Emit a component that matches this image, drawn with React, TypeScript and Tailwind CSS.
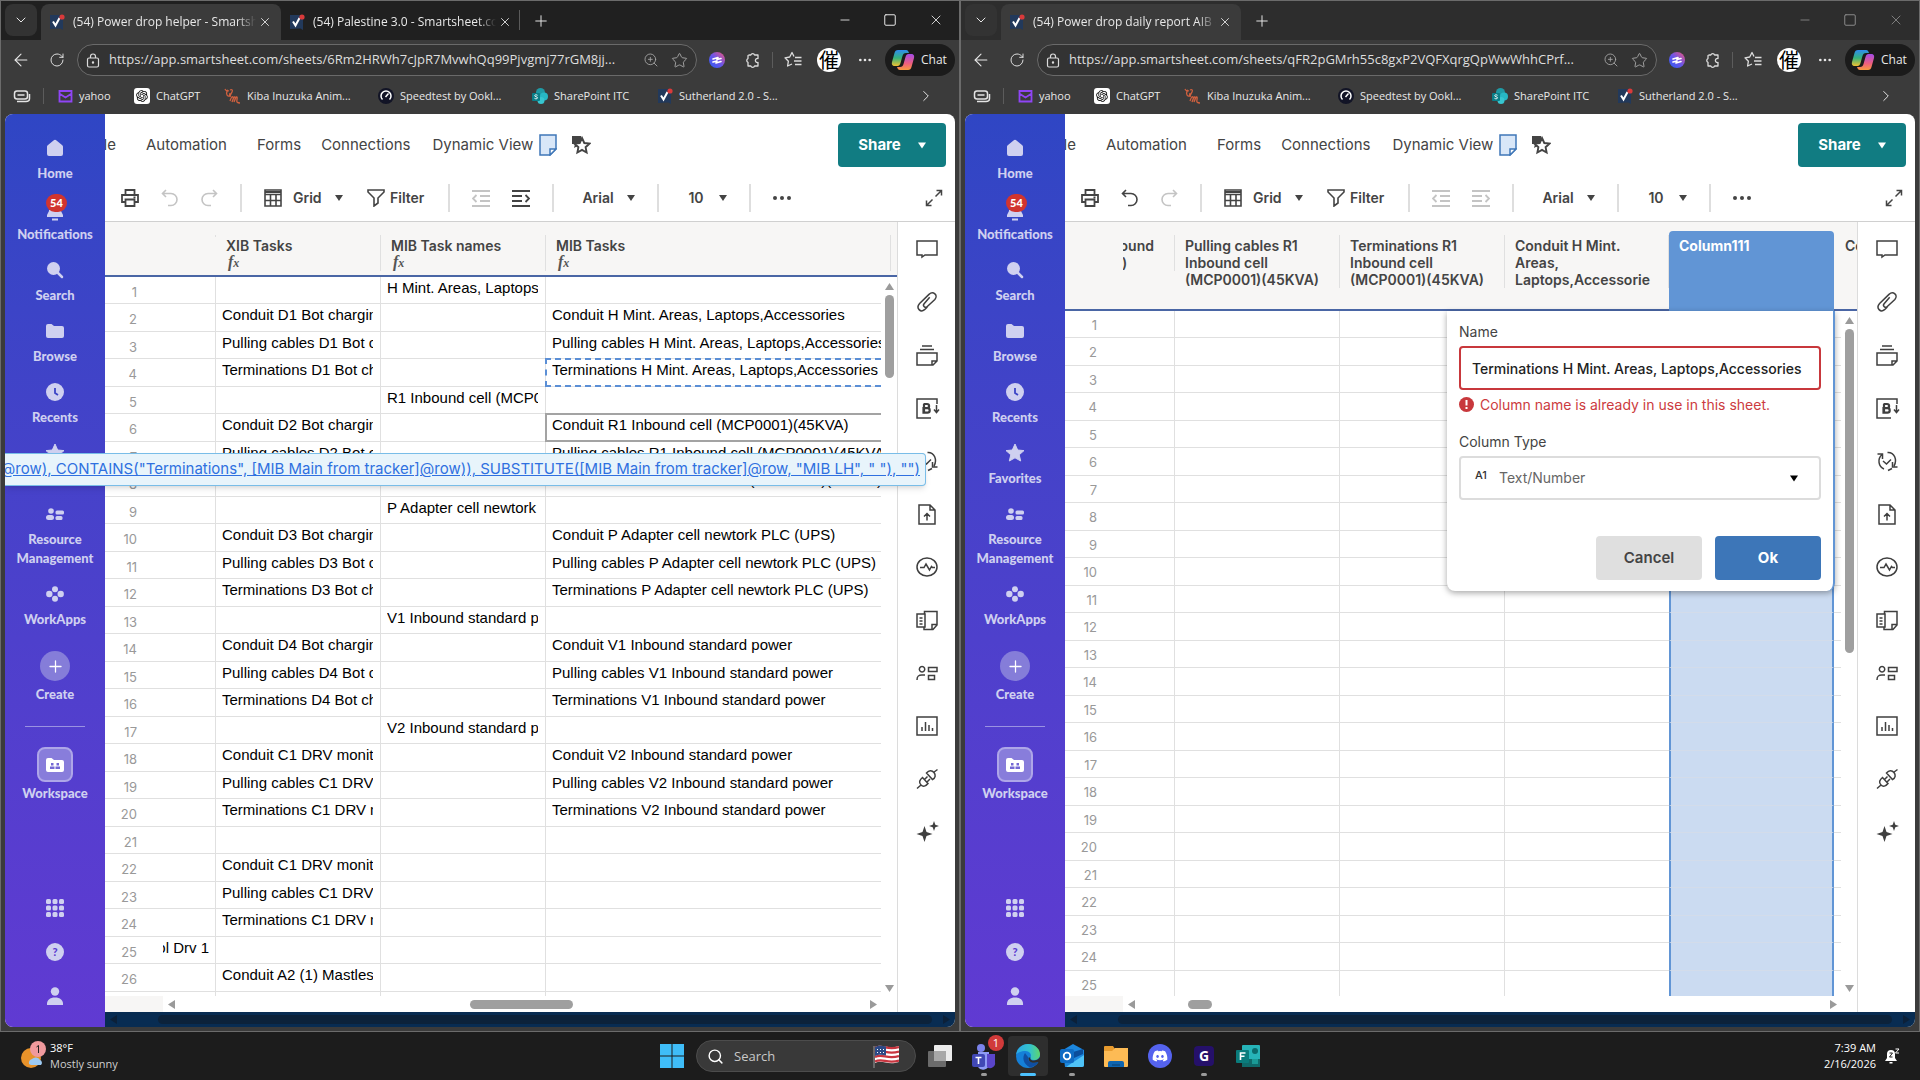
import clsx from 'clsx';
import {
  ArrowLeft,
  ChevronDown,
  ChevronRight,
  Ellipsis,
  Minus,
  Plus,
  RotateCw,
  Search,
  Square,
  Star,
  X,
  ZoomIn,
} from 'lucide-react';
import {FC, memo, ReactNode, useId} from 'react';
import {FaDiscord} from 'react-icons/fa';
import {RiOpenaiFill} from 'react-icons/ri';

type Row = [string?, string?, string?, string?];

interface BrowserTab {
  title: string;
}

const helperRows: Row[] = [
  ['', '', 'H Mint. Areas, Laptops,Accessories'],
  ['', 'Conduit D1 Bot charging', '', 'Conduit H Mint. Areas, Laptops,Accessories'],
  ['', 'Pulling cables D1 Bot charging', '', 'Pulling cables H Mint. Areas, Laptops,Accessories'],
  ['', 'Terminations D1 Bot charging', '', 'Terminations H Mint. Areas, Laptops,Accessories'],
  ['', '', 'R1 Inbound cell (MCP0001)(45KVA)'],
  ['', 'Conduit D2 Bot charging', '', 'Conduit R1 Inbound cell (MCP0001)(45KVA)'],
  ['', 'Pulling cables D2 Bot charging', '', 'Pulling cables R1 Inbound cell (MCP0001)(45KVA)'],
  ['', 'Terminations D2 Bot charging', '', 'Terminations R1 Inbound cell (MCP0001)(45KVA)'],
  ['', '', 'P Adapter cell newtork PLC (UPS)'],
  ['', 'Conduit D3 Bot charging', '', 'Conduit P Adapter cell newtork PLC (UPS)'],
  ['', 'Pulling cables D3 Bot charging', '', 'Pulling cables P Adapter cell newtork PLC (UPS)'],
  ['', 'Terminations D3 Bot charging', '', 'Terminations P Adapter cell newtork PLC (UPS)'],
  ['', '', 'V1 Inbound standard power'],
  ['', 'Conduit D4 Bot charging', '', 'Conduit V1 Inbound standard power'],
  ['', 'Pulling cables D4 Bot charging', '', 'Pulling cables V1 Inbound standard power'],
  ['', 'Terminations D4 Bot charging', '', 'Terminations V1 Inbound standard power'],
  ['', '', 'V2 Inbound standard power'],
  ['', 'Conduit C1 DRV monitor', '', 'Conduit V2 Inbound standard power'],
  ['', 'Pulling cables C1 DRV monitor', '', 'Pulling cables V2 Inbound standard power'],
  ['', 'Terminations C1 DRV monitor', '', 'Terminations V2 Inbound standard power'],
  [],
  ['', 'Conduit C1 DRV monitor'],
  ['', 'Pulling cables C1 DRV monitor'],
  ['', 'Terminations C1 DRV monitor'],
  ['ol Drv 1'],
  ['', 'Conduit A2 (1) Mastless'],
  [],
];

const reportRows = Array.from({length: 25}, (_, i) => i + 1);

const SmartsheetFavicon: FC = memo(() => (
  <svg className="h-4 w-4 shrink-0" viewBox="0 0 16 16">
    <path d="M1 1h13v15l-2.500-1.500L1 15z" fill="#22395b" />
    <path d="M4 7.500l2.500 4L10.500 4" fill="none" stroke="#fff" strokeWidth="2" />
    <circle cx="13" cy="3" fill="#d93a3a" r="2.600" />
  </svg>
));

const YahooIcon: FC = memo(() => (
  <svg className="h-[15px] w-[15px]" viewBox="0 0 15 15">
    <path d="M1.500 2h12v10.500h-12zM2 5l5.500 3.500L13 5" fill="none" stroke="#8f45f5" strokeWidth="1.800" />
  </svg>
));

const ChatGptIcon: FC = memo(() => (
  <span className="flex h-4 w-4 items-center justify-center rounded-[3px] bg-white text-black">
    <RiOpenaiFill size={14} />
  </span>
));

const KibaIcon: FC = memo(() => (
  <svg className="h-4 w-[17px]" viewBox="0 0 17 16">
    <path
      d="M1 1c1 2 2 2 3 1M5 3c-2-1-3 2-2 4s3 1 3-1H5M6 2c2-1 3 0 2 2s-2 3-2 5M6 13c1-3 2-5 3-4s-1 5-1 5 2-6 3-5-1 5-1 5 2-6 3-5-1 4 0 5 2 1 3 1"
      fill="none"
      stroke="#d0613f"
      strokeWidth="1.300"
    />
  </svg>
));

const SpeedtestIcon: FC = memo(() => (
  <svg className="h-4 w-4" viewBox="0 0 16 16">
    <circle cx="8" cy="8" fill="#121426" r="8" />
    <path d="M4.500 11.500a5 5 0 1 1 7 0" fill="none" stroke="#fff" strokeWidth="1.500" />
    <path d="M7.500 9l3-3.500" stroke="#fff" strokeWidth="1.500" />
  </svg>
));

const SharePointIcon: FC = memo(() => (
  <svg className="h-4 w-4" viewBox="0 0 16 16">
    <circle cx="8.500" cy="4.500" fill="#1f9aa5" r="4.500" />
    <circle cx="12" cy="8.500" fill="#27b7c4" r="4" />
    <circle cx="9" cy="12.500" fill="#37c6d0" r="3.500" />
    <rect fill="#0a7f88" height="8" rx="1" width="8" y="5" />
    <path d="M5.500 7.300c-1-.8-3-.5-2.800.5.200 1.100 2.800.8 2.800 2 0 1.100-2 1.300-3 .5" fill="none" stroke="#fff" />
  </svg>
));

const CollectionsIcon: FC = memo(() => (
  <svg className="h-4 w-[18px]" fill="none" stroke="#e4e4e4" strokeWidth="1.500" viewBox="0 0 18 16">
    <rect height="8" rx="2.500" width="13" x="1.500" y="3" />
    <path d="M4.500 7h7M4 13.500h9c2.500 0 3.500-1.500 3.500-3V6" />
  </svg>
));

const bookmarks: {label: string; width: string; icon: ReactNode}[] = [
  {label: 'yahoo', width: 'w-[76px]', icon: <YahooIcon />},
  {label: 'ChatGPT', width: 'w-[90px]', icon: <ChatGptIcon />},
  {label: 'Kiba Inuzuka Anim...', width: 'w-[154px]', icon: <KibaIcon />},
  {label: 'Speedtest by Ookl...', width: 'w-[154px]', icon: <SpeedtestIcon />},
  {label: 'SharePoint ITC', width: 'w-[125px]', icon: <SharePointIcon />},
  {label: 'Sutherland 2.0 - S...', width: 'w-[140px]', icon: <SmartsheetFavicon />},
];

const CopilotIcon: FC = memo(() => {
  const id = useId();
  return (
    <svg className="h-6 w-6" viewBox="0 0 24 24">
      <defs>
        <linearGradient id={`${id}a`} x1="0" x2="0" y1="0" y2="1">
          <stop offset="0" stopColor="#2f8cf0" />
          <stop offset=".5" stopColor="#34b27b" />
          <stop offset="1" stopColor="#f2c230" />
        </linearGradient>
        <linearGradient id={`${id}b`} x1="0" x2="0" y1="0" y2="1">
          <stop offset="0" stopColor="#a44be8" />
          <stop offset=".6" stopColor="#ef5f7d" />
          <stop offset="1" stopColor="#f79a3e" />
        </linearGradient>
      </defs>
      <path
        d="M7 2h8c2 0 2.500 1.500 3 3h-3c-2 0-3 1-3.500 3L9.500 15c-.5 2-1.500 3-3 3H4c-3 0-3.500-2-3-4L3.500 5C4 3 5 2 7 2z"
        fill={`url(#${id}a)`}
      />
      <path
        d="M17 22H9c-2 0-2.500-1.500-3-3h3c2 0 3-1 3.500-3l2-7c.5-2 1.500-3 3-3H20c3 0 3.500 2 3 4l-2.500 9c-.5 2-1.500 3-3.500 3z"
        fill={`url(#${id}b)`}
      />
    </svg>
  );
});

const OrbIcon: FC = memo(() => {
  const id = useId();
  return (
    <svg className="h-4 w-4" viewBox="0 0 16 16">
      <defs>
        <linearGradient id={id} x1="0" x2="1" y1="1" y2="0">
          <stop offset="0" stopColor="#2b5bf5" />
          <stop offset=".5" stopColor="#6b55e8" />
          <stop offset="1" stopColor="#f0557a" />
        </linearGradient>
      </defs>
      <circle cx="8" cy="8" fill={`url(#${id})`} r="8" />
      <path
        d="M4 7l5-1.500L8 7.500l4-1M4 10l4-1-1 2 5-1.500"
        fill="none"
        stroke="#fff"
        strokeLinecap="round"
        strokeLinejoin="round"
        strokeWidth="1.600"
      />
    </svg>
  );
});

const ExtensionsIcon: FC = memo(() => (
  <svg className="h-[17px] w-[15px]" fill="none" stroke="#dcdcdc" strokeWidth="1.300" viewBox="0 0 15 17">
    <path
      d="M4 3h1.800a2 2 0 0 1 3.800 0H13v3.500c-3.500-.6-3.500 4.500 0 4v3.500H9.600a2 2 0 0 1-3.800 0H3v-3.700a2 2 0 0 1 0-3.700V3.500z"
      strokeLinejoin="round"
    />
  </svg>
));

const FavoritesIcon: FC = memo(() => (
  <svg className="h-[18px] w-[18px]" fill="none" stroke="#dcdcdc" strokeWidth="1.300" viewBox="0 0 18 18">
    <path d="M10 5.500L8 1.500 5.700 6l-4.700.8 3.400 3.400-.8 4.800L8 13" strokeLinejoin="round" />
    <path d="M11 6.500h6.500M10 10h7.500M11 13.500h6.500" />
  </svg>
));

const BrowserChrome: FC<{tabs: BrowserTab[]; url: string; active: boolean}> = memo(({tabs, url, active}) => (
  <header className="font-['Open_Sans','Noto_Sans',sans-serif] text-[#e8e8e8]">
    <div className={clsx('flex h-[39px] items-end', active ? 'bg-[#202020]' : 'bg-[#2d2d2d]')}>
      <button
        aria-label="Tab actions"
        className="mb-1 ml-1 flex h-8 w-8 items-center justify-center rounded-lg bg-[#333333]">
        <ChevronDown size={16} strokeWidth={1.500} />
      </button>
      {tabs.map(({title}, index) => (
        <div
          className={clsx('flex h-9 items-center rounded-t-lg', index === 0 ? 'ml-1 w-60 bg-[#3b3b3b] pl-2' : 'w-[238px] pl-2')}
          key={title}>
          <SmartsheetFavicon />
          <span className="ml-2 w-[183px] overflow-hidden mask-r-from-90% text-xs whitespace-nowrap">{title}</span>
          <button aria-label="Close tab" className="ml-[2px]">
            <X size={14} strokeWidth={1.500} />
          </button>
        </div>
      ))}
      {tabs.length > 1 && <span className="mb-2.5 h-5 w-px bg-[#5a5a5a]" />}
      <button aria-label="New tab" className="mb-2.5 ml-3">
        <Plus size={18} strokeWidth={1.300} />
      </button>
      <div className={clsx('mr-[15px] mb-3 ml-auto flex items-center gap-[31px]', !active && 'text-[#8a8a8a]')}>
        <button aria-label="Minimize">
          <Minus size={14} strokeWidth={1.500} />
        </button>
        <button aria-label="Maximize">
          <Square size={14} strokeWidth={1.700} />
        </button>
        <button aria-label="Close">
          <X size={16} strokeWidth={1.300} />
        </button>
      </div>
    </div>
    <div className="flex h-10 items-center">
      <button aria-label="Back" className="ml-[10px]">
        <ArrowLeft size={20} strokeWidth={1.300} />
      </button>
      <button aria-label="Reload" className="ml-[18px]">
        <RotateCw size={16} strokeWidth={1.400} />
      </button>
      <div className="ml-3 flex h-8 min-w-0 flex-1 items-center rounded-full border border-[#6a6a6a] bg-[#333333] pr-2 pl-2">
        <svg className="h-[15px] w-[14px] shrink-0" fill="none" stroke="#dcdcdc" strokeWidth="1.200" viewBox="0 0 14 15">
          <rect height="9" rx="1.500" width="11" x="1.500" y="5" />
          <path d="M4.500 5V3.500a2.500 2.500 0 0 1 5 0V5" />
          <circle cx="7" cy="9.500" fill="#dcdcdc" r=".6" />
        </svg>
        <input
          aria-label="Address"
          className="ml-[9px] min-w-0 flex-1 bg-transparent text-[13px] text-[#dedede] outline-none"
          readOnly
          type="text"
          value={url}
        />
        <button aria-label="Zoom" className="text-[#a8a8a8]">
          <ZoomIn size={16} strokeWidth={1.300} />
        </button>
        <button aria-label="Add to favorites" className="ml-3 text-[#a8a8a8]">
          <Star size={17} strokeWidth={1.300} />
        </button>
      </div>
      <button aria-label="Extension" className="ml-3">
        <OrbIcon />
      </button>
      <button aria-label="Extensions" className="ml-[20px]">
        <ExtensionsIcon />
      </button>
      <span className="ml-3 h-4 w-px bg-[#5c5c5c]" />
      <button aria-label="Favorites" className="ml-[11px]">
        <FavoritesIcon />
      </button>
      <button
        aria-label="Profile"
        className="ml-[15px] flex h-6 w-6 items-center justify-center rounded-full bg-white font-['Noto_Sans_CJK_JP',sans-serif] text-xl leading-6 text-black">
        催
      </button>
      <button aria-label="Settings" className="ml-4">
        <Ellipsis size={16} />
      </button>
      <button className="mr-1 ml-3 flex h-8 w-[70px] items-center gap-[6px] rounded-full bg-[#1b1b1b] pl-[6px] text-xs">
        <CopilotIcon />
        Chat
      </button>
    </div>
    <nav className="flex h-[34px] items-center pb-[2px] text-[11px]">
      <span className="ml-3">
        <CollectionsIcon />
      </span>
      <span className="mr-[14px] ml-3 h-4 w-px bg-[#5c5c5c]" />
      {bookmarks.map(({label, width, icon}) => (
        <a className={clsx('flex shrink-0 items-center gap-[6px] whitespace-nowrap', width)} href="#" key={label}>
          {icon}
          {label}
        </a>
      ))}
      <button aria-label="More bookmarks" className="mr-6 ml-auto">
        <ChevronRight size={18} strokeWidth={1.300} />
      </button>
    </nav>
  </header>
));

const SideItem: FC<{label: string; children: ReactNode}> = memo(({label, children}) => (
  <a className="flex flex-col items-center text-center" href="#">
    <span className="flex h-5 items-center">{children}</span>
    <span className="mt-[6px] leading-[19px]">{label}</span>
  </a>
));

const Sidebar: FC = memo(() => (
  <aside className="flex w-[100px] shrink-0 flex-col bg-linear-to-b from-[#2f46c4] to-[#603ad2] pt-6 font-['Lato',sans-serif] text-[13px] font-black text-[#cfd0f0]">
    <nav className="flex flex-col gap-4">
      <SideItem label="Home">
        <svg className="h-[18px] w-[18px]" viewBox="0 0 18 18">
          <path d="M1 8c0-1 .3-1.500 1-2l5.500-4.500a2.300 2.300 0 0 1 3 0L16 6c.7.500 1 1 1 2v7a2 2 0 0 1-2 2H3a2 2 0 0 1-2-2z" fill="currentColor" />
        </svg>
      </SideItem>
      <SideItem label="Notifications">
        <span className="relative flex">
          <svg className="h-6 w-[18px]" viewBox="0 0 18 24">
            <path d="M3 8a6 6 0 0 1 12 0v6l2 4v2H1v-2l2-4zM6 21.500h6v2H6z" fill="currentColor" />
          </svg>
          <span className="absolute -top-[3px] left-0 flex h-[18px] w-[21px] items-center justify-center rounded-full bg-[#d1342f] text-[11px] text-white">
            54
          </span>
        </span>
      </SideItem>
      <SideItem label="Search">
        <svg className="h-[18px] w-[18px]" viewBox="0 0 18 18">
          <circle cx="7.500" cy="7.500" fill="currentColor" r="6.500" />
          <path d="M11 11l5 5" stroke="currentColor" strokeLinecap="round" strokeWidth="2.500" />
        </svg>
      </SideItem>
      <SideItem label="Browse">
        <svg className="h-4 w-[18px]" viewBox="0 0 18 16">
          <path d="M0 3a2 2 0 0 1 2-2h3.500L8 3h8a2 2 0 0 1 2 2v8a2 2 0 0 1-2 2H2a2 2 0 0 1-2-2z" fill="currentColor" />
        </svg>
      </SideItem>
      <SideItem label="Recents">
        <svg className="h-[18px] w-[18px]" viewBox="0 0 18 18">
          <circle cx="9" cy="9" fill="currentColor" r="9" />
          <path d="M9 5v5l3 2" fill="none" stroke="#3b44c6" strokeWidth="1.800" />
        </svg>
      </SideItem>
      <SideItem label="Favorites">
        <svg className="h-5 w-5" viewBox="0 0 20 20">
          <path d="M10 1l2.700 6 6.300.6-4.800 4.200L15.700 18 10 14.800 4.300 18l1.500-6.200L1 7.600 7.300 7z" fill="currentColor" stroke="currentColor" strokeLinejoin="round" />
        </svg>
      </SideItem>
      <SideItem label="Resource Management">
        <svg className="h-3 w-[18px]" fill="currentColor" viewBox="0 0 18 12">
          <circle cx="5" cy="3" r="2.800" />
          <rect height="5" rx="2.500" width="8" y="7" />
          <rect height="4" rx="1.500" width="8.500" x="9.500" y="2.500" />
          <rect height="4" rx="1.500" width="7" x="9.500" y="8" />
        </svg>
      </SideItem>
      <SideItem label="WorkApps">
        <svg className="h-[18px] w-[18px]" fill="currentColor" viewBox="0 0 18 18">
          <circle cx="9" cy="4.300" r="3" />
          <circle cx="9" cy="13.700" r="3" />
          <circle cx="3.300" cy="9" r="3.200" />
          <circle cx="14.700" cy="9" r="3.200" />
        </svg>
      </SideItem>
      <a className="mt-[6px] flex flex-col items-center" href="#">
        <span className="flex h-[30px] w-[30px] items-center justify-center rounded-full bg-[#857dd9] text-white">
          <Plus size={19} strokeWidth={1.600} />
        </span>
        <span className="mt-1 leading-[19px]">Create</span>
      </a>
    </nav>
    <hr className="mx-5 mt-[22px] border-[#9a92e2]" />
    <a className="mt-5 flex flex-col items-center" href="#">
      <span className="flex h-[35px] w-9 items-center justify-center rounded-lg border-2 border-[#aea6e8] bg-[#887ddb] text-white">
        <svg className="h-4 w-[18px]" viewBox="0 0 18 16">
          <path d="M0 3a2 2 0 0 1 2-2h3.500L8 3h8a2 2 0 0 1 2 2v8a2 2 0 0 1-2 2H2a2 2 0 0 1-2-2z" fill="currentColor" />
          <path d="M5 6h2.500v2.500H5zM10.500 6H13v2.500h-2.500zM4 9.500h4.500V12H4zM9.500 9.500H14V12H9.500z" fill="#7468d4" />
        </svg>
      </span>
      <span className="mt-[2px] leading-[19px]">Workspace</span>
    </a>
    <div className="mt-auto mb-[22px] flex flex-col items-center gap-[26px]">
      <button aria-label="Apps">
        <svg className="h-[18px] w-[18px]" fill="currentColor" viewBox="0 0 18 18">
          {[0, 6.5, 13].map(y => [0, 6.5, 13].map(x => <rect height="5" key={`${x}-${y}`} rx="1.500" width="5" x={x} y={y} />))}
        </svg>
      </button>
      <button
        aria-label="Help"
        className="flex h-[18px] w-[18px] items-center justify-center rounded-full bg-[#cfd0f0] text-[11px] text-[#5b3ccf]">
        ?
      </button>
      <button aria-label="Account">
        <svg className="h-[18px] w-[18px]" fill="currentColor" viewBox="0 0 18 18">
          <circle cx="9" cy="4.500" r="4.200" />
          <path d="M1 18c-.5-5 3-7.500 8-7.500s8.500 2.500 8 7.500z" />
        </svg>
      </button>
    </div>
  </aside>
));

const Caret: FC<{className?: string}> = memo(({className}) => (
  <svg className={clsx('pointer-events-none h-[6px] w-[8px] shrink-0', className)} viewBox="0 0 8 6">
    <path d="M0 0h8L4 6z" fill="currentColor" />
  </svg>
));

const MenuRow: FC = memo(() => (
  <div className="flex h-[62px] shrink-0 items-center overflow-hidden text-[15px] whitespace-nowrap text-[#444]">
    <a className="-ml-4 w-[27px] shrink-0 text-right" href="#">
      File
    </a>
    <a className="ml-[30px]" href="#">
      Automation
    </a>
    <a className="ml-[30px]" href="#">
      Forms
    </a>
    <a className="ml-5" href="#">
      Connections
    </a>
    <a className="ml-[22px]" href="#">
      Dynamic View
    </a>
    <svg className="ml-[6px] h-[22px] w-[18px] shrink-0" viewBox="0 0 18 22">
      <path d="M1 1h16v14l-6 6H1z" fill="#d9e7f8" stroke="#3f77b8" strokeWidth="1.500" />
      <path d="M17 15h-6v6z" fill="#fff" stroke="#3f77b8" strokeWidth="1.500" />
    </svg>
    <button aria-label="Favorite sheet" className="ml-[14px]">
      <svg className="h-5 w-5" viewBox="0 0 20 20">
        <path d="M1 1h9v8L3 13l1-4H1z" fill="#444" />
        <path d="M11 3l2.300 5 5.200.6-3.900 3.600 1 5.300-4.600-2.600L6.400 17.500l1-5.300L3.500 8.600 8.700 8z" fill="#fff" stroke="#444" strokeWidth="1.900" />
      </svg>
    </button>
    <button className="mr-[9px] ml-auto flex h-11 w-[108px] shrink-0 items-center justify-center gap-[17px] rounded bg-[#117c82] font-bold text-white">
      Share
      <Caret className="h-[7px]" />
    </button>
  </div>
));

const Divider: FC<{className?: string}> = ({className}) => (
  <span className={clsx('h-7 w-[2px] shrink-0 bg-[#dedede]', className)} />
);

const IndentIcon: FC<{out?: boolean}> = ({out}) => (
  <svg className="h-[17px] w-[18px]" fill="none" stroke="currentColor" strokeWidth="1.800" viewBox="0 0 18 17">
    <path d="M0 1h18M0 16h18" />
    {out ? <path d="M8 6h10M8 11h10M4.500 5L1 8.500 4.500 12" /> : <path d="M0 6h10M0 11h10M13.500 5L17 8.500 13.500 12" />}
  </svg>
);

const ToolSelect: FC<{label: string; value: string; className?: string}> = ({label, value, className}) => (
  <span className={clsx('flex items-center', className)}>
    <select aria-label={label} className="flex-1 appearance-none bg-transparent font-semibold outline-none">
      <option>{value}</option>
    </select>
    <Caret />
  </span>
);

const ToolRow: FC<{canUndo: boolean}> = memo(({canUndo}) => (
  <div className="flex h-[46px] shrink-0 items-center border-b border-[#d0d0d0] pb-px text-sm text-[#444]">
    <button aria-label="Print" className="ml-4">
      <svg className="h-[18px] w-[18px]" fill="none" stroke="currentColor" strokeWidth="1.800" viewBox="0 0 18 18">
        <path d="M4.500 6V1h9v5M4.500 13H1V6h16v7h-3.500M4.500 10.500h9V17h-9zM12.500 8.300h2" />
      </svg>
    </button>
    <button aria-label="Undo" className={clsx('ml-[22px]', !canUndo && 'text-[#c4c4c4]')}>
      <svg className="h-[18px] w-[18px]" fill="none" stroke="currentColor" strokeWidth="1.600" viewBox="0 0 18 18">
        <path d="M5 1L1.500 4.500 5 8M2 4.500h8a6 6 0 0 1 0 12H7" />
      </svg>
    </button>
    <button aria-label="Redo" className="ml-[21px] text-[#c4c4c4]">
      <svg className="h-[18px] w-[18px]" fill="none" stroke="currentColor" strokeWidth="1.600" viewBox="0 0 18 18">
        <path d="M13 1l3.500 3.500L13 8M16 4.500H8a6 6 0 0 0 0 12h3" />
      </svg>
    </button>
    <Divider className="ml-[22px]" />
    <svg className="ml-[22px] h-[18px] w-[18px]" fill="none" stroke="currentColor" strokeWidth="1.600" viewBox="0 0 18 18">
      <path d="M1 1h16v16H1zM1 5.500h16M1 11.500h16M6.500 5.500V17M12 5.500V17" />
      <path d="M1 3h16" strokeWidth="2" />
    </svg>
    <ToolSelect className="ml-[11px] w-[50px]" label="View" value="Grid" />
    <button className="ml-[24px] flex items-center gap-[5px] font-semibold">
      <svg className="h-[18px] w-[18px]" fill="none" stroke="currentColor" strokeWidth="1.600" viewBox="0 0 18 18">
        <path d="M1 1h16v2l-6 6v5l-4 3V9L1 3z" />
      </svg>
      Filter
    </button>
    <Divider className="ml-[24px]" />
    <button aria-label="Outdent" className="ml-[22px] text-[#c4c4c4]">
      <IndentIcon out />
    </button>
    <button aria-label="Indent" className={clsx('ml-[22px]', canUndo && 'text-[#c4c4c4]')}>
      <IndentIcon />
    </button>
    <Divider className="ml-[22px]" />
    <ToolSelect className="ml-[28px] w-[53px]" label="Font" value="Arial" />
    <Divider className="ml-[22px]" />
    <ToolSelect className="ml-[29px] w-[39px]" label="Font size" value="10" />
    <Divider className="ml-[22px]" />
    <button aria-label="More" className="ml-[22px]">
      <svg className="h-[18px] w-[18px]" fill="currentColor" viewBox="0 0 18 18">
        <circle cx="2" cy="9" r="2" />
        <circle cx="9" cy="9" r="2" />
        <circle cx="16" cy="9" r="2" />
      </svg>
    </button>
    <button aria-label="Expand" className="mr-3 ml-auto">
      <svg className="h-[18px] w-[18px]" fill="none" stroke="currentColor" strokeWidth="1.500" viewBox="0 0 18 18">
        <path d="M11.500 1.500h5v5M16.500 1.500l-6 6M6.500 16.500h-5v-5M1.500 16.500l6-6" />
      </svg>
    </button>
  </div>
));

const railIcons: {label: string; paths: ReactNode}[] = [
  {label: 'Conversations', paths: <path d="M1 3h20v14H9l-3 2v-2H1z" />},
  {
    label: 'Attachments',
    paths: (
      <path d="M14 6.500L8 12.500c-2 2 .8 5 3 3l8-6.500c4-4-1-9-5.500-5.500L3.500 12c-4.500 4.500.5 9.500 4.500 6.500l3-2.500" transform="rotate(-4 11 11)" />
    ),
  },
  {label: 'Proofs', paths: <path d="M6 2h10M4 5.500h14M1 9h20v8l-4 4H1zM21 17h-5v4" />},
  {
    label: 'Brandfolder',
    paths: (
      <>
        <path d="M15 21H1V2h20v5M20.500 8v7M18 12.500l2.500 3 2.500-3" />
        <path d="M7.500 7h3.500a2 2 0 0 1 0 4.200H8.500M7.500 11.200h4a2.200 2.200 0 0 1 0 4.400h-4zM8 7v8" strokeWidth="2.200" />
      </>
    ),
  },
  {
    label: 'Update requests',
    paths: <path d="M1.500 4h5v5M6 4.500C1 9 2.500 17 8 19M11.500 2.500c7-.5 10 7.500 6.500 13.500M21.500 17h-5v-5M12 20.500l4-2M7 11l3.500 3 4.500-4.500" />,
  },
  {label: 'Publish', paths: <path d="M3 2h11l5 5v14H3zM14 2v5h5M11 17.500v-7M8 13.500l3-3 3 3" />},
  {
    label: 'Activity log',
    paths: (
      <>
        <ellipse cx="11" cy="11" rx="10" ry="9" />
        <path d="M4 11.500h4l2-3.500 3.500 6 2-3.500 1 1H19" />
      </>
    ),
  },
  {label: 'Summary', paths: <path d="M8.500 5V2.500H21V16l-4 4.500H8V18M21 15.500h-5v5M1 5h8v13H1zM3.500 9h3M3.500 12h3M3.500 15h3" />},
  {label: 'Resource', paths: <path d="M6 4.500a2.700 2.700 0 1 0 .1 0zM1 18c0-4 1.500-5 5-5h3M12.500 5.500H21v4h-8.500zM12.500 13.500h6v4h-6z" />},
  {label: 'Charts', paths: <path d="M1 2h20v18H1zM6 16v-4M9.500 16V7M13 16v-6M16.500 16v-3" />},
  {
    label: 'Connectors',
    paths: (
      <path d="M1 20.500l4-3.500M21.500 1.500l-4 3M5 17c-2.500-2.500-1.500-5 1.500-7.500l5.500 6c-2.500 3-5 3.500-7 1.500zM10.500 5l6 6.500c3-1.500 3.500-4.500 1.500-7s-5-2.500-7.500.5zM8.500 11.500l3-3M11 14l3-3" />
    ),
  },
  {
    label: 'AI',
    paths: (
      <path d="M8.500 5l2 6 6 2-6 2-2 6-2-6-6-2 6-2zM18 0l1.300 3.700L23 5l-3.700 1.300L18 10l-1.300-3.700L13 5l3.700-1.300z" fill="currentColor" stroke="none" />
    ),
  },
];

const RightRail: FC = memo(() => (
  <aside className="flex w-[58px] shrink-0 flex-col items-center gap-[31px] border-l border-[#dcdcdc] pt-4 text-[#3f3f3f]">
    {railIcons.map(({label, paths}) => (
      <button aria-label={label} className="flex" key={label}>
        <svg className="h-[22px] w-[22px] overflow-visible" fill="none" stroke="currentColor" strokeWidth="1.500" viewBox="0 0 22 22">
          {paths}
        </svg>
      </button>
    ))}
  </aside>
));

const FormulaMark: FC = () => (
  <span className="block pl-[2px] font-['Liberation_Serif',serif] text-[16px] leading-[15px] font-bold text-[#555] italic">
    f<span className="text-[12px]">x</span>
  </span>
);

const HeaderCell: FC<{children?: ReactNode; last?: boolean; span?: number}> = ({children, last, span}) => (
  <th className="h-full border-b-2 border-[#4a66a5] bg-[#f7f6f5] p-0 pt-[13px] text-left align-top" colSpan={span}>
    <div
      className={clsx(
        'h-full border-r border-[#e0e0e0] pt-[2px] pr-2 pl-[10px] text-sm leading-[17px] font-semibold text-[#444]',
        last && 'mr-[6px]',
      )}>
      {children}
    </div>
  </th>
);

const NumberCell: FC<{value: number | ''}> = ({value}) => (
  <td className="border-b border-[#e0e0e0] pt-[3px] pr-[26px] text-right font-['Inter',sans-serif] text-[13px] text-[#999]">
    {value}
  </td>
);

const HelperTable: FC = memo(() => (
  <table className="w-full table-fixed border-separate border-spacing-0 font-['Liberation_Sans',sans-serif] text-[15px] leading-[18px] text-black">
    <colgroup>
      <col className="w-[58px]" />
      <col className="w-[53px]" />
      <col className="w-[165px]" />
      <col className="w-[165px]" />
      <col />
      <col className="w-4" />
    </colgroup>
    <thead className="font-['Inter',sans-serif]">
      <tr className="h-[55px]">
        <th className="border-b-2 border-[#4a66a5] bg-[#f7f6f5]" />
        <HeaderCell />
        <HeaderCell>
          XIB Tasks
          <FormulaMark />
        </HeaderCell>
        <HeaderCell>
          MIB Task names
          <FormulaMark />
        </HeaderCell>
        <HeaderCell last span={2}>
          MIB Tasks
          <FormulaMark />
        </HeaderCell>
      </tr>
    </thead>
    <tbody>
      {helperRows.map(([source, xib, mibName, mib], index) => (
        <tr className="h-[28px] odd:h-[27px]" key={index}>
          <NumberCell value={index < 26 ? index + 1 : ''} />
          <td className="border-r border-b border-[#e0e0e0] p-0 pr-[6px] align-top">
            <div className="flex justify-end overflow-hidden pt-[2px] whitespace-nowrap">{source}</div>
          </td>
          <td className="border-r border-b border-[#e0e0e0] p-0 pr-[7px] pl-[6px] align-top">
            <div className="overflow-hidden pt-[2px] whitespace-nowrap">{xib}</div>
          </td>
          <td className="border-r border-b border-[#e0e0e0] p-0 pr-[7px] pl-[6px] align-top">
            <div className="overflow-hidden pt-[2px] whitespace-nowrap">{mibName}</div>
          </td>
          <td
            className={clsx(
              'relative border-b border-[#e0e0e0] p-0 pl-[6px] align-top',
              index === 3 && 'z-10',
            )}>
            <div className="overflow-hidden pt-[2px] whitespace-nowrap">{mib}</div>
            {index === 3 && (
              <span className="absolute -inset-y-px right-0 -left-px border-2 border-r-0 border-dashed border-[#5b8fd6]" />
            )}
            {index === 5 && <span className="absolute -inset-y-px right-0 -left-px border-2 border-r-0 border-[#a3a3a3]" />}
          </td>
          <td />
        </tr>
      ))}
    </tbody>
  </table>
));

const ReportTable: FC = memo(() => (
  <table className="w-full table-fixed border-separate border-spacing-0">
    <colgroup>
      <col className="w-[58px]" />
      <col className="w-[52px]" />
      <col className="w-[165px]" />
      <col className="w-[165px]" />
      <col className="w-[164px]" />
      <col className="w-[165px]" />
      <col />
      <col className="w-4" />
    </colgroup>
    <thead>
      <tr className="h-[89px]">
        <th className="border-b-2 border-[#4a66a5] bg-[#f7f6f5]" />
        <th className="h-full border-b-2 border-[#4a66a5] bg-[#f7f6f5] p-0 pt-[13px] align-top">
          <div className="flex h-full flex-col items-end overflow-hidden border-r border-[#e0e0e0] pt-[2px] pr-5 text-sm leading-[17px] font-semibold text-[#444]">
            <span>Inbound</span>
            <span className="w-8 text-left">)</span>
          </div>
        </th>
        <HeaderCell>
          Pulling cables R1
          <br />
          Inbound cell
          <br />
          (MCP0001)(45KVA)
        </HeaderCell>
        <HeaderCell>
          Terminations R1
          <br />
          Inbound cell
          <br />
          (MCP0001)(45KVA)
        </HeaderCell>
        <HeaderCell>
          Conduit H Mint.
          <br />
          Areas,
          <br />
          Laptops,Accessorie
        </HeaderCell>
        <th className="bg-[#f7f6f5] p-0 pt-[9px]">
          <div className="h-20 rounded-t-sm bg-[#6195d5] pt-[6px] pl-[10px] text-left text-sm leading-[17px] font-bold text-white">
            Column111
          </div>
        </th>
        <th
          className="overflow-hidden border-b-2 border-[#4a66a5] bg-[#f7f6f5] p-0 pt-[15px] pl-[11px] text-left align-top text-sm leading-[17px] font-semibold whitespace-nowrap text-[#444]"
          colSpan={2}>
          Column112
        </th>
      </tr>
    </thead>
    <tbody>
      {reportRows.map(row => (
        <tr className="h-[28px] odd:h-[27px]" key={row}>
          <NumberCell value={row} />
          <td className="border-r border-b border-[#e0e0e0]" />
          <td className="border-r border-b border-[#e0e0e0]" />
          <td className="border-r border-b border-[#e0e0e0]" />
          <td className="border-b border-[#e0e0e0]" />
          <td className="border-x-2 border-b border-x-[#6195d5] border-b-[#d3dcea] bg-[#cbdbf1]" />
          <td className="border-b border-[#e0e0e0]" />
          <td />
        </tr>
      ))}
    </tbody>
  </table>
));

const ColumnDialog: FC = memo(() => {
  const nameId = useId();
  const typeId = useId();
  return (
    <form
      aria-label="Column properties"
      className="absolute top-[89px] right-[22px] z-20 flex w-[388px] flex-col rounded-b-lg border-r-2 border-[#6195d5] bg-white px-3 pt-3 pb-[11px] text-sm text-[#444] shadow-[0_2px_6px_rgba(0,0,0,0.35)]">
      <label className="leading-[17px]" htmlFor={nameId}>
        Name
      </label>
      <input
        className="mt-[6px] h-11 rounded border-2 border-[#c8383c] pr-1 pl-[11px] font-medium text-[#222] outline-none"
        defaultValue="Terminations H Mint. Areas, Laptops,Accessories"
        id={nameId}
        type="text"
      />
      <p className="mt-[5px] flex items-center gap-[6px] leading-[19px] text-[#cc3b40]">
        <svg className="h-[15px] w-[15px]" viewBox="0 0 15 15">
          <circle cx="7.500" cy="7.500" fill="#c8383c" r="7.500" />
          <path d="M7.500 3v5.500M7.500 10v2" stroke="#fff" strokeWidth="2" />
        </svg>
        Column name is already in use in this sheet.
      </p>
      <label className="mt-[19px] leading-[17px]" htmlFor={typeId}>
        Column Type
      </label>
      <div className="mt-[6px] flex h-11 items-center rounded border-2 border-[#dcdcdc] pr-[21px] pl-[14px]">
        <span aria-hidden className="-mt-1 text-[11px] font-medium text-[#333]">
          A1
        </span>
        <select className="ml-3 flex-1 appearance-none bg-transparent text-[#666] outline-none" id={typeId}>
          <option>Text/Number</option>
        </select>
        <Caret className="h-[7px] text-black" />
      </div>
      <div className="mt-9 flex justify-end gap-[13px] text-[15px] font-semibold">
        <button className="h-11 w-[106px] rounded bg-[#dfdfdf] text-[#444]" type="button">
          Cancel
        </button>
        <button className="h-11 w-[106px] rounded bg-[#3d76b8] font-bold text-white" type="button">
          Ok
        </button>
      </div>
    </form>
  );
});

const ScrollArrow: FC<{className?: string}> = ({className}) => (
  <svg className={clsx('h-[7px] w-[9px]', className)} viewBox="0 0 9 7">
    <path d="M4.500 0L9 7H0z" fill="currentColor" />
  </svg>
);

const SheetGrid: FC<{table: ReactNode; scrollTop: string; thumbY: string; thumbX: string; overlay?: ReactNode}> = memo(
  ({table, scrollTop, thumbY, thumbX, overlay}) => (
    <section className="flex min-w-0 flex-1 flex-col text-[#9a9a9a]">
      <div className="relative min-h-0 flex-1">
        <div className="h-full overflow-hidden">{table}</div>
        <div className={clsx('absolute right-0 bottom-0 flex w-4 flex-col items-center', scrollTop)}>
          <ScrollArrow className="mt-[6px]" />
          <span className={clsx('mt-[5px] w-[9px] rounded-full bg-[#9f9f9f]', thumbY)} />
          <ScrollArrow className="mt-auto mb-1 rotate-180" />
        </div>
        {overlay}
      </div>
      <div className="flex h-4 shrink-0 items-center">
        <span className="h-full w-[58px] bg-[#f7f6f5]" />
        <ScrollArrow className="ml-1 -rotate-90" />
        <span className={clsx('h-[9px] rounded-full bg-[#9f9f9f]', thumbX)} />
        <ScrollArrow className="mr-[19px] ml-auto rotate-90" />
      </div>
    </section>
  ),
);

interface WindowProps {
  active: boolean;
  tabs: BrowserTab[];
  url: string;
  grid: ReactNode;
  overlay?: ReactNode;
}

const BrowserWindow: FC<WindowProps> = memo(({active, tabs, url, grid, overlay}) => (
  <div className="flex min-h-0 min-w-0 flex-col border border-[#6b6b6b] bg-[#3b3b3b]">
    <BrowserChrome active={active} tabs={tabs} url={url} />
    <div className="relative mx-1 mb-1 flex min-h-0 flex-1 overflow-hidden rounded-lg bg-white">
      <Sidebar />
      <main className="flex min-w-0 flex-1 flex-col font-['Inter',sans-serif]">
        <MenuRow />
        <ToolRow canUndo={!active} />
        <div className="flex min-h-0 flex-1">
          {grid}
          <RightRail />
        </div>
        <div className="flex h-[15px] shrink-0 items-center bg-[#082c52] text-[#0c2038]">
          <ScrollArrow className="ml-1 -rotate-90" />
          <span className="mr-[10px] ml-10 h-[9px] flex-1 rounded-full bg-[#0c223a]" />
          <ScrollArrow className="mr-1 rotate-90" />
        </div>
      </main>
      {overlay}
    </div>
  </div>
));

const FormulaTip: FC = memo(() => (
  <div className="absolute top-[339px] left-0 z-20 flex h-[33px] w-[921px] items-center justify-end overflow-hidden rounded-r-sm border border-l-0 border-[#79bde8] bg-[#e8f4fb] pr-[5px] font-['Inter',sans-serif] text-[15px] whitespace-nowrap text-[#2f70e0] underline shadow-md">
    =IF(AND(HAS([MIB Main from tracker]@row), CONTAINS("Terminations", [MIB Main from tracker]@row)),
    SUBSTITUTE([MIB Main from tracker]@row, "MIB LH", " "), "")
  </div>
));

const TaskSlot: FC<{label: string; active?: boolean; running?: boolean; children: ReactNode}> = ({
  label,
  active,
  running,
  children,
}) => (
  <button
    aria-label={label}
    className={clsx('relative mx-[2px] flex h-10 w-10 items-center justify-center rounded', active && 'bg-[#2e2e2e]')}>
    {children}
    {active && <span className="absolute bottom-0 h-[3px] w-4 rounded-full bg-[#4cc2ff]" />}
    {running && <span className="absolute bottom-0 h-[3px] w-[6px] rounded-full bg-[#9a9a9a]" />}
  </button>
);

const Taskbar: FC = memo(() => (
  <footer className="grid h-12 shrink-0 grid-cols-[1fr_auto_1fr] items-center bg-[#1c1c1c] font-['Open_Sans','Noto_Sans',sans-serif] text-[11px] leading-4 text-white">
    <div className="flex items-center gap-1 pl-5">
      <svg className="h-[30px] w-[26px]" viewBox="0 0 26 30">
        <circle cx="11" cy="17" fill="#e8922a" r="10" />
        <path d="M9 23a4 4 0 0 1 3-5 5 5 0 0 1 8 1 3 3 0 0 1 1 5H11z" fill="#9cc9f2" />
        <circle cx="18" cy="8" fill="#f09a9d" r="8" />
        <path d="M16.500 6l2-1.500V12" fill="none" stroke="#222" />
      </svg>
      <div>
        <div>38°F</div>
        <div className="text-[#cfcfcf]">Mostly sunny</div>
      </div>
    </div>
    <div className="flex items-center">
      <TaskSlot label="Start">
        <svg className="h-6 w-6" viewBox="0 0 24 24">
          <path d="M0 0h11.500v11.500H0zM12.500 0H24v11.500H12.500zM0 12.500h11.500V24H0zM12.500 12.500H24V24H12.500z" fill="#3fbdf8" />
        </svg>
      </TaskSlot>
      <label className="mx-[2px] flex h-8 w-[220px] items-center rounded-full border border-[#4c4c4c] bg-[#393939] pr-4 pl-[10px]">
        <Search size={17} strokeWidth={2} />
        <input
          aria-label="Search"
          className="ml-[10px] w-0 flex-1 bg-transparent text-[13px] outline-none placeholder:text-[#c8c8c8]"
          placeholder="Search"
          type="text"
        />
        <svg className="h-6 w-[26px]" viewBox="0 0 26 24">
          <path d="M1 2v22" stroke="#9a9a9a" />
          <path d="M2 3c8-4 12 3 24-1v16c-12 4-16-3-24 1z" fill="#fff" />
          <path
            d="M2 4c8-4 12 3 24-1M2 8.500c8-4 12 3 24-1M2 13c8-4 12 3 24-1M2 17.500c8-4 12 3 24-1"
            fill="none"
            stroke="#c8353f"
            strokeWidth="2.200"
          />
          <path d="M2 3c4-2 7-1.500 11-.5v9c-4-1-7-1.500-11 .5z" fill="#2c4a86" />
          <path d="M4 5.500h7M4 8.500h7" stroke="#fff" strokeDasharray="1 2" />
        </svg>
      </label>
      <TaskSlot label="Task view">
        <svg className="h-[22px] w-6" viewBox="0 0 24 22">
          <rect fill="#6b6b6b" height="16" rx="1" width="18" y="6" />
          <rect fill="#ececec" height="16" rx="1" width="18" x="6" />
          <rect fill="#a8a8a8" height="10" width="12" x="6" y="6" />
        </svg>
      </TaskSlot>
      <TaskSlot label="Teams" running>
        <svg className="h-7 w-7" viewBox="0 0 28 28">
          <circle cx="11" cy="6" fill="#7b83eb" r="4" />
          <path d="M8 10h11v12a6 6 0 0 1-11 3z" fill="#8f9bf5" />
          <path d="M17 12h8v8a5 5 0 0 1-8 5z" fill="#5a45c9" />
          <rect fill="#4148b5" height="13" rx="2" width="13" x="2" y="12" />
          <path d="M5.500 15.500h6M8.500 15.500v6.500" stroke="#fff" strokeWidth="1.600" />
        </svg>
        <span className="absolute -top-px right-0 flex h-4 w-4 items-center justify-center rounded-full bg-[#d13a3a]">1</span>
      </TaskSlot>
      <TaskSlot active label="Edge">
        <svg className="h-6 w-6" viewBox="0 0 24 24">
          <defs>
            <linearGradient id="edge-top" x1="0" x2="1">
              <stop offset="0" stopColor="#2aa9e8" />
              <stop offset=".6" stopColor="#35c3c8" />
              <stop offset="1" stopColor="#5fd66b" />
            </linearGradient>
          </defs>
          <circle cx="12" cy="12" fill="#1580d8" r="12" />
          <path d="M0 11C1 4 6 0 12 0c7 0 12 5 12 10 0 4-3 6-6 6s-4-1-3.500-2.500C16 11 14 7 9.500 7 5 7 1 9 0 11z" fill="url(#edge-top)" />
          <path d="M9 9c-3 4-2 11 5 14.500 4-.5 7-3 8.500-6-5 2.500-11 1-10.500-4.500z" fill="#0f4fa3" />
          <path d="M14.500 13.500C13.500 15.500 16 17 19 16.300c2-.4 4-1.300 5-3.300v5h-2c-5 2-10 0-9.500-4.500z" fill="#2e2e2e" />
        </svg>
      </TaskSlot>
      <TaskSlot label="Outlook" running>
        <svg className="h-6 w-6" viewBox="0 0 24 24">
          <path d="M3 6l10-6 11 6v15a2 2 0 0 1-2 2H5z" fill="#1c87de" />
          <path d="M13 8l10-3v5l-9 4z" fill="#0b4e9c" />
          <path d="M6 23l18-12v10a2 2 0 0 1-2 2z" fill="#4fc3f7" />
          <rect fill="#0f6cc4" height="14" rx="2" width="14" y="5" />
          <circle cx="7" cy="12" fill="none" r="3.300" stroke="#fff" strokeWidth="1.800" />
        </svg>
      </TaskSlot>
      <TaskSlot label="File Explorer">
        <svg className="h-[22px] w-6" viewBox="0 0 24 22">
          <path d="M0 2a1 1 0 0 1 1-1h8l2 3h12a1 1 0 0 1 1 1v15H0z" fill="#e89b2e" />
          <path d="M0 6l8 0 3-3h13v18a1 1 0 0 1-1 1H1a1 1 0 0 1-1-1z" fill="#fdbb55" />
          <path d="M4 22v-4a2 2 0 0 1 2-2h12a2 2 0 0 1 2 2v4z" fill="#0f65b0" />
          <path d="M8 20h8" stroke="#0c4c86" strokeWidth="1.500" />
        </svg>
      </TaskSlot>
      <TaskSlot label="Discord">
        <span className="flex h-6 w-6 items-center justify-center rounded-full bg-[#5563ee]">
          <FaDiscord size={16} />
        </span>
      </TaskSlot>
      <TaskSlot label="G Hub" running>
        <span className="flex h-5 w-5 items-center justify-center rounded bg-[#25106a] text-sm font-bold">G</span>
      </TaskSlot>
      <TaskSlot label="Forms">
        <svg className="h-[22px] w-6" viewBox="0 0 24 22">
          <rect fill="#26b3b8" height="22" rx="1" width="18" x="6" />
          <path d="M6 14h18v8H6z" fill="#0f6a6a" />
          <path d="M16 14h6v5h-6z" fill="#1a9a96" />
          <circle cx="19" cy="6" fill="#0b6a6c" r="3" />
          <rect fill="#0a7c7c" height="13" rx="1" width="13" y="5" />
          <path d="M4.500 15V8h5M4.500 11.300h4" fill="none" stroke="#fff" strokeWidth="1.600" />
        </svg>
      </TaskSlot>
    </div>
    <div className="flex items-center justify-end gap-2 pr-5">
      <div className="text-right">
        <div>7:39 AM</div>
        <div>2/16/2026</div>
      </div>
      <svg className="h-4 w-4" viewBox="0 0 16 16">
        <path d="M3 6a4 4 0 0 1 8 0v4l2 3H1l2-3zM5.500 14h3v1.500h-3z" fill="#fff" />
        <path d="M11.500 1H15l-3.500 4H15" fill="none" stroke="#fff" />
        <path d="M5.500 5h3l-3 4h3" fill="none" stroke="#1c1c1c" />
      </svg>
    </div>
  </footer>
));

const App: FC = () => (
  <div className="flex h-screen flex-col overflow-hidden bg-[#1c1c1c]">
    <div className="grid min-h-0 flex-1 grid-cols-2 grid-rows-1">
      <BrowserWindow
        active
        grid={
          <SheetGrid scrollTop="top-[55px]" table={<HelperTable />} thumbX="ml-[294px] w-[103px]" thumbY="h-[83px]" />
        }
        overlay={<FormulaTip />}
        tabs={[{title: '(54) Power drop helper - Smartsheet.com'}, {title: '(54) Palestine 3.0 - Smartsheet.com'}]}
        url="https://app.smartsheet.com/sheets/6Rm2HRWh7cJpR7MvwhQq99Pjvgmj77rGM8jj..."
      />
      <BrowserWindow
        active={false}
        grid={
          <SheetGrid
            overlay={<ColumnDialog />}
            scrollTop="top-[89px]"
            table={<ReportTable />}
            thumbX="ml-[52px] w-6"
            thumbY="h-[324px]"
          />
        }
        tabs={[{title: '(54) Power drop daily report AIB - Smartsheet.com'}]}
        url="https://app.smartsheet.com/sheets/qFR2pGMrh55c8gxP2VQFXqrgQpWwWhhCPrf..."
      />
    </div>
    <Taskbar />
  </div>
);

export default App;
